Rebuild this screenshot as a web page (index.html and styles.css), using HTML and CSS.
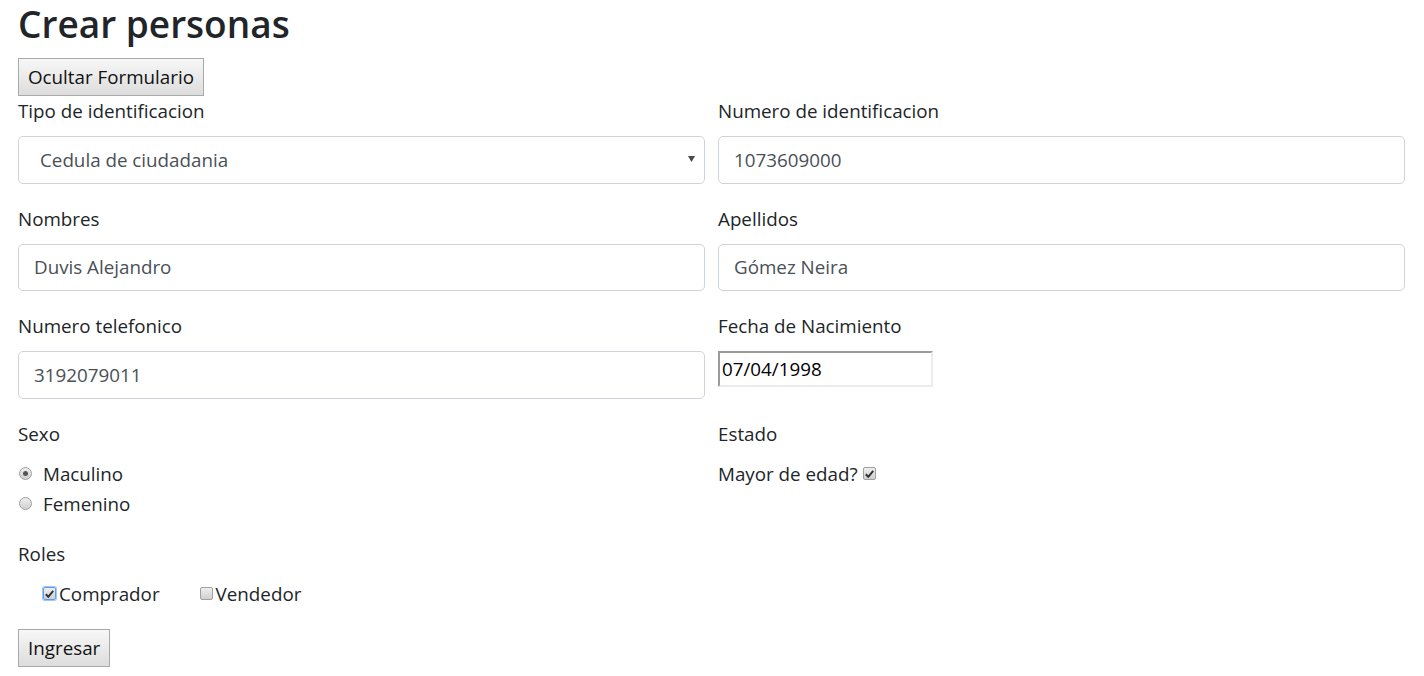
FILE: index.html
```html
<!DOCTYPE html>
<html lang="es">
<head>
<meta charset="utf-8">
<title>Crear personas</title>
<link rel="stylesheet" href="styles.css">
</head>
<body>
<h2 class="title">Crear personas</h2>
<button class="native-btn" type="button">Ocultar Formulario</button>
<form class="form-grid">
  <div class="group">
    <label class="label">Tipo de identificacion</label>
    <div class="select-wrap">
      <select class="control select">
        <option>Cedula de ciudadania</option>
      </select>
      <svg class="select-arrow" width="7" height="6" viewBox="0 0 7 6"><path d="M0 0H7L3.5 6Z" fill="#4a4a4a"/></svg>
    </div>
  </div>
  <div class="group">
    <label class="label">Numero de identificacion</label>
    <input class="control" type="text" value="1073609000">
  </div>
  <div class="group">
    <label class="label">Nombres</label>
    <input class="control" type="text" value="Duvis Alejandro">
  </div>
  <div class="group">
    <label class="label">Apellidos</label>
    <input class="control" type="text" value="Gómez Neira">
  </div>
  <div class="group">
    <label class="label">Numero telefonico</label>
    <input class="control" type="text" value="3192079011">
  </div>
  <div class="group">
    <label class="label">Fecha de Nacimiento</label>
    <input class="date-input" type="text" value="07/04/1998">
  </div>
  <div class="group">
    <label class="label">Sexo</label>
    <div class="check-line">
      <span class="radio checked"></span>
      <span>Maculino</span>
    </div>
    <div class="check-line">
      <span class="radio"></span>
      <span>Femenino</span>
    </div>
  </div>
  <div class="group">
    <label class="label">Estado</label>
    <div class="check-line after">
      <span>Mayor de edad?</span>
      <span class="cb"><svg width="9" height="8" viewBox="0 0 9 8"><path d="M0.8 4.2L3.3 6.8L8.2 0.9" fill="none" stroke="#333" stroke-width="2"/></svg></span>
    </div>
  </div>
  <div class="group">
    <label class="label">Roles</label>
    <div class="roles">
      <div class="role">
        <span class="cb focus"><svg width="9" height="8" viewBox="0 0 9 8"><path d="M0.8 4.2L3.3 6.8L8.2 0.9" fill="none" stroke="#333" stroke-width="2"/></svg></span>
        <span>Comprador</span>
      </div>
      <div class="role">
        <span class="cb"></span>
        <span>Vendedor</span>
      </div>
    </div>
  </div>
</form>
<button class="native-btn" type="button">Ingresar</button>
</body>
</html>
```

FILE: styles.css
```css
html, body {
  background: #fff;
}
body {
  margin: 0;
  padding: 0 19px 0 18px;
  font-family: "Open Sans", "Noto Sans", sans-serif;
  font-size: 18.8px;
  line-height: 30px;
  color: #212529;
}
.title {
  margin: 0 0 10px;
  font-size: 37px;
  line-height: 48px;
  font-weight: 600;
}
.native-btn {
  display: block;
  height: 38px;
  padding: 0 9px;
  border: 1px solid #a9a9a9;
  border-radius: 0;
  background: linear-gradient(#f7f7f7, #dddddd);
  font-family: inherit;
  font-size: 18.8px;
  line-height: 30px;
  color: #111;
}
.form-grid {
  display: grid;
  grid-template-columns: 1fr 1fr;
  column-gap: 13px;
  margin: 0;
}
.group {
  margin-bottom: 20px;
  display: flex;
  flex-direction: column;
  align-items: flex-start;
}
.label {
  display: block;
  margin-bottom: 10px;
  line-height: 30px;
  padding-top: 1px;
  margin-top: -1px;
}
.control {
  box-sizing: border-box;
  width: 100%;
  height: 47.5px;
  padding: 0 15px;
  border: 1px solid #ced4da;
  border-radius: 5px;
  background: #fff;
  font-family: inherit;
  font-size: 18.8px;
  color: #495057;
  outline: none;
}
.select-wrap {
  position: relative;
  width: 100%;
}
.select {
  appearance: none;
  -webkit-appearance: none;
  padding-left: 21px;
}
.select-arrow {
  position: absolute;
  right: 10px;
  top: 20px;
}
.date-input {
  box-sizing: border-box;
  width: 215px;
  height: 36px;
  padding: 0 2px;
  border-style: solid;
  border-width: 2px;
  border-color: #9a9a9a #ececec #ececec #9a9a9a;
  font-family: inherit;
  font-size: 18.8px;
  color: #000;
  outline: none;
}
.check-line {
  display: flex;
  align-items: center;
  gap: 11px;
  height: 30px;
}
.check-line.after {
  gap: 5px;
}
.radio {
  box-sizing: border-box;
  width: 13px;
  height: 13px;
  margin-left: 1px;
  border: 1px solid #a0a0a0;
  border-radius: 50%;
  background: linear-gradient(#eeeeee, #d0d0d0);
  display: flex;
  align-items: center;
  justify-content: center;
}
.radio.checked::after {
  content: "";
  width: 5px;
  height: 5px;
  border-radius: 50%;
  background: #555;
}
.cb {
  box-sizing: border-box;
  width: 13px;
  height: 13px;
  border: 1px solid #a0a0a0;
  border-radius: 2px;
  background: linear-gradient(#eeeeee, #d0d0d0);
  display: flex;
  align-items: center;
  justify-content: center;
}
.cb.focus {
  border: 1px solid #5b9ef0;
  box-shadow: 0 0 0 1px #9fc6f5;
}
.roles {
  display: flex;
  gap: 40px;
  padding-left: 25px;
  height: 30px;
}
.role {
  display: flex;
  align-items: center;
  gap: 3px;
}
```
